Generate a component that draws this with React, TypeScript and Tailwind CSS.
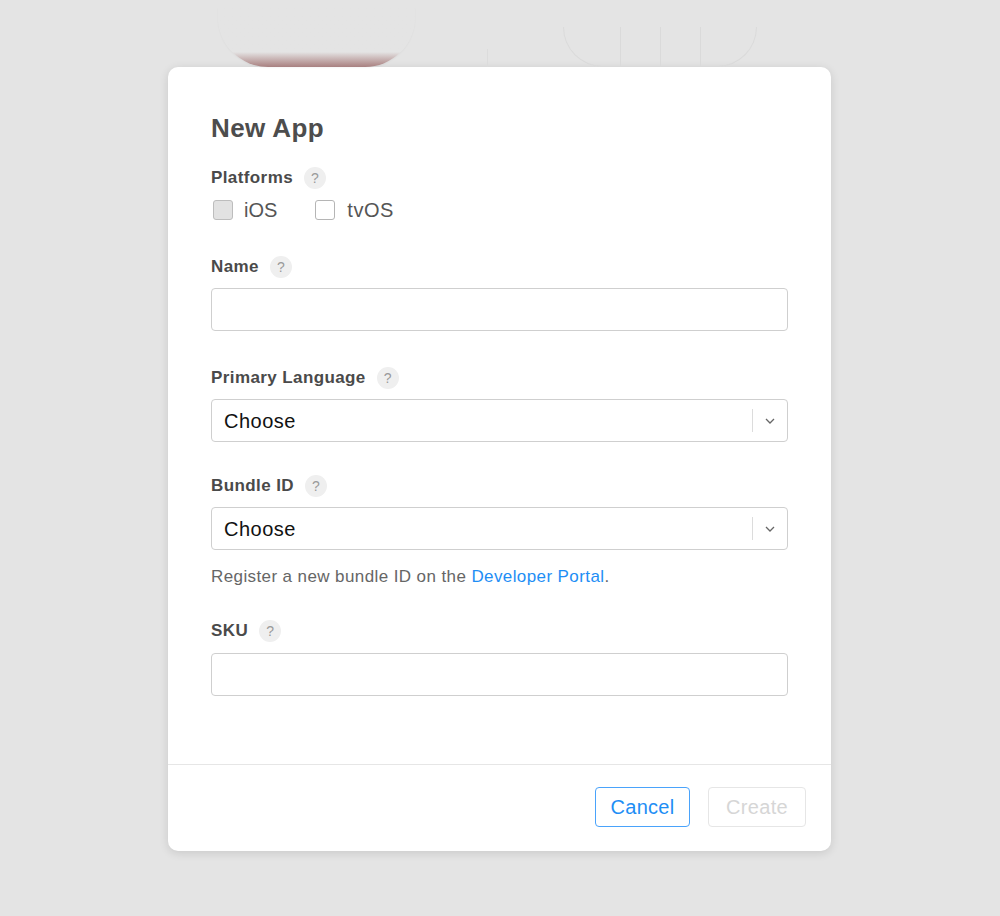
import React from "react";

const font = { fontFamily: '"Liberation Sans", Arial, sans-serif' };

function Help() {
  return (
    <span className="ml-[11px] inline-flex h-[22px] w-[22px] items-center justify-center rounded-full bg-[#efefef] text-[14px] font-normal tracking-normal text-[#9a9a9a]">
      ?
    </span>
  );
}

function Label({ children }: { children: React.ReactNode }) {
  return (
    <div className="flex h-[22px] items-center text-[17px] font-bold leading-[22px] tracking-[0.4px] text-[#4a4a4a]">
      <span>{children}</span>
      <Help />
    </div>
  );
}

function TextField() {
  return (
    <input
      type="text"
      className="h-[43px] w-[577px] rounded-[4px] border border-[#cfcfcf] bg-white px-3 text-[18px] outline-none"
    />
  );
}

function SelectField() {
  return (
    <div className="flex h-[43px] w-[577px] items-center rounded-[4px] border border-[#cfcfcf] bg-white">
      <span className="flex-1 pl-[12px] text-[20px] tracking-[0.5px] text-[#111]">Choose</span>
      <span className="h-[23px] w-px bg-[#dcdcdc]" />
      <span className="flex w-[34px] items-center justify-center">
        <svg width="10" height="6" viewBox="0 0 10 6" fill="none">
          <path d="M1 1l4 4 4-4" stroke="#666" strokeWidth="1.3" />
        </svg>
      </span>
    </div>
  );
}

export default function App() {
  return (
    <div className="h-[916px] w-[1000px] overflow-hidden bg-[#e4e4e4]" style={font}>
      {/* faint page content behind the sheet */}
      <div className="flex h-[67px] items-end">
        <div className="ml-[218px] h-[60px] w-[197px] rounded-b-[50px] bg-gradient-to-b from-[#e4e4e4] from-75% to-[#a88080] shadow-[0_1px_2px_rgba(0,0,0,0.04)]" />
        <div className="ml-[72px] h-[18px] w-px bg-[#dcdcdc]" />
        <div className="ml-[75px] flex h-[40px] w-[194px] overflow-hidden rounded-b-[40px] border border-t-0 border-[#dadada]">
          <div className="w-[57px] border-r border-[#dadada]" />
          <div className="w-[40px] border-r border-[#dadada]" />
          <div className="w-[40px] border-r border-[#dadada]" />
          <div className="flex-1" />
        </div>
      </div>

      <div className="ml-[168px] flex h-[784px] w-[663px] flex-col rounded-[10px] bg-white shadow-[0_2px_10px_rgba(0,0,0,0.12)]">
        <div className="flex-1 px-[43px] pt-[45px]">
          <h1 className="text-[26px] font-bold leading-[32px] tracking-[0.4px] text-[#4d4d4d]">New App</h1>

          <div className="mt-[23px]">
            <Label>Platforms</Label>
          </div>
          <div className="mt-[11px] flex h-[20px] items-center text-[20px] text-[#555]">
            <span className="ml-[2px] h-[20px] w-[20px] rounded-[3px] border border-[#bdbdbd] bg-[#e2e2e2]" />
            <span className="ml-[11px]">iOS</span>
            <span className="ml-[38px] h-[20px] w-[20px] rounded-[3px] border border-[#b5b5b5] bg-white" />
            <span className="ml-[12px] tracking-[0.5px]">tvOS</span>
          </div>

          <div className="mt-[36px]">
            <Label>Name</Label>
          </div>
          <div className="mt-[10px]">
            <TextField />
          </div>

          <div className="mt-[36px]">
            <Label>Primary Language</Label>
          </div>
          <div className="mt-[10px]">
            <SelectField />
          </div>

          <div className="mt-[33px]">
            <Label>Bundle ID</Label>
          </div>
          <div className="mt-[10px]">
            <SelectField />
          </div>
          <p className="mt-[17px] text-[17px] leading-[20px] tracking-[0.4px] text-[#666]">
            Register a new bundle ID on the{" "}
            <span className="text-[#1e8ef5]">Developer Portal</span>.
          </p>

          <div className="mt-[33px]">
            <Label>SKU</Label>
          </div>
          <div className="mt-[11px]">
            <TextField />
          </div>
        </div>

        <div className="flex h-[87px] justify-end gap-[18px] border-t border-[#e6e6e6] pr-[25px] pt-[22px]">
          <button className="h-[40px] w-[95px] rounded-[4px] border border-[#4aa3fb] text-[20px] tracking-[0.3px] text-[#1e8ef5]">
            Cancel
          </button>
          <button className="h-[40px] w-[98px] rounded-[4px] border border-[#e6e6e6] text-[20px] tracking-[0.3px] text-[#d6d6d6]">
            Create
          </button>
        </div>
      </div>
    </div>
  );
}
